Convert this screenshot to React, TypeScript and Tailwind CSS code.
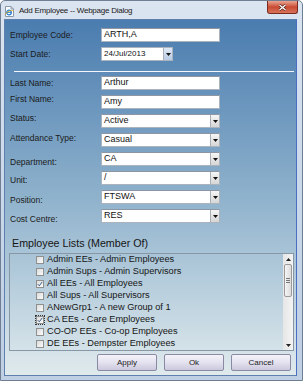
import type { ReactNode } from 'react';

const groups = [
  { label: 'Admin EEs - Admin Employees', checked: false },
  { label: 'Admin Sups - Admin Supervisors', checked: false },
  { label: 'All EEs - All Employees', checked: true },
  { label: 'All Sups - All Supervisors', checked: false },
  { label: 'ANewGrp1 - A new Group of 1', checked: false },
  { label: 'CA EEs - Care Employees', checked: true, focus: true },
  { label: 'CO-OP EEs - Co-op Employees', checked: false },
  { label: 'DE EEs - Dempster Employees', checked: false },
];

function DropButton({ light }: { light?: boolean }) {
  return (
    <div
      className={`w-[9px] h-full flex items-center justify-center border-l border-[#a9b0b8] ${
        light ? 'bg-gradient-to-b from-[#dfe8f5] to-[#b9cbe6]' : 'bg-gradient-to-b from-[#f6f6f6] to-[#d6d6d6]'
      }`}
    >
      <svg width="5" height="3" viewBox="0 0 5 3">
        <path d="M0 0h5L2.5 3z" fill="#111" />
      </svg>
    </div>
  );
}

function Row({ label, labelCls = '', children }: { label: string; labelCls?: string; children: ReactNode }) {
  return (
    <div className="flex h-[14px] items-stretch">
      <div className={`w-[91px] flex items-center text-[8.5px] text-[#1b1b1b] ${labelCls}`}>{label}</div>
      {children}
    </div>
  );
}

function TextBox({ value }: { value: string }) {
  return (
    <div className="w-[119px] bg-white border border-[#abb3bd] border-t-[#8d96a2] flex items-center px-[2px] text-[9px] text-[#111]">
      {value}
    </div>
  );
}

function Select({ value }: { value: string }) {
  return (
    <div className="w-[119px] bg-white border border-[#abb3bd] border-t-[#8d96a2] flex items-stretch text-[9px] text-[#111]">
      <div className="flex-1 flex items-center px-[2px]">{value}</div>
      <DropButton />
    </div>
  );
}

function Check({ checked, focus }: { checked: boolean; focus?: boolean }) {
  return (
    <div className={`w-[10px] h-[10px] flex items-center justify-center ${focus ? 'border border-dotted border-[#333]' : ''}`}>
      <div className="w-[8px] h-[8px] border border-[#8e8f8f] bg-gradient-to-br from-[#dcdcdc] to-[#fbfbfb] flex items-center justify-center">
        {checked && (
          <svg width="6" height="6" viewBox="0 0 6 6">
            <path d="M0.8 3.2L2.3 4.8L5.2 0.9" stroke="#2a4a7a" strokeWidth="0.9" fill="none" />
          </svg>
        )}
      </div>
    </div>
  );
}

function Btn({ label }: { label: string }) {
  return (
    <button className="w-[60px] h-[17px] rounded-[2px] border border-[#8b8aa5] bg-gradient-to-b from-[#f4f3fa] via-[#e4e2ef] to-[#cac8dc] text-[8px] text-[#1b1b1b]">
      {label}
    </button>
  );
}

export default function App() {
  return (
    <div className="w-[303px] h-[381px] bg-gradient-to-b from-[#dbe5f1] via-[#c9d8ea] to-[#bfcfe4] border border-[#6f7e92] rounded-t-[5px] font-['Liberation_Sans',Arial,sans-serif] overflow-hidden">
      {/* Title bar */}
      <div className="h-[18px] flex items-start justify-between">
        <div className="flex items-center gap-[4px] pl-[3px] pt-[4px]">
          <svg width="11" height="11" viewBox="0 0 11 11">
            <path d="M1.5 0.5h5.5l2.5 2.5v7.5h-8z" fill="#fff" stroke="#8a97a8" />
            <path d="M7 0.5v2.5h2.5" fill="none" stroke="#8a97a8" />
            <circle cx="5" cy="6.5" r="2.3" fill="none" stroke="#2a7fd8" strokeWidth="1.3" />
            <path d="M3 6.4h4" stroke="#2a7fd8" strokeWidth="1" />
            <path d="M1.2 8.5C3 5.5 7 4 9.5 4.8" stroke="#f0b400" strokeWidth="0.8" fill="none" />
          </svg>
          <span className="text-[8px] tracking-[-0.25px] text-[#1a1a1a]">Add Employee -- Webpage Dialog</span>
        </div>
        <div className="mr-[4px] w-[31px] h-[13px] rounded-b-[3px] border border-t-0 border-[#7a2a20] bg-gradient-to-b from-[#e8a593] via-[#c94a32] to-[#d6735a] flex items-center justify-center">
          <svg width="9" height="7" viewBox="0 0 9 7">
            <path d="M1.5 1L7.5 6M7.5 1L1.5 6" stroke="#4a1a12" strokeWidth="2.6" />
            <path d="M1.5 1L7.5 6M7.5 1L1.5 6" stroke="#fff" strokeWidth="1.4" />
          </svg>
        </div>
      </div>

      {/* Client area */}
      <div className="ml-[3px] w-[293px] h-[357px] border border-[#5f7fae] border-r-[#4b6dc2] bg-gradient-to-b from-[#4a7caf] via-[#8fb2cc] to-[#e0eaed] flex flex-col pt-[8px]">
        <div className="ml-[5px] flex flex-col gap-[5px]">
          <Row label="Employee Code:">
            <TextBox value="ARTH,A" />
          </Row>
          <Row label="Start Date:">
            <div className="w-[72px] bg-white border border-[#abb3bd] flex items-stretch text-[8px] text-[#111]">
              <div className="flex-1 flex items-center px-[2px]">24/Jul/2013</div>
              <DropButton light />
            </div>
          </Row>
        </div>

        <div className="mt-[10px] ml-[9px] w-[280px] h-px bg-[#f2f6fa]" />

        <div className="mt-[4px] ml-[5px] flex flex-col gap-[5px]">
          <Row label="Last Name:">
            <TextBox value="Arthur" />
          </Row>
          <Row label="First Name:" labelCls="pb-[5px]">
            <TextBox value="Amy" />
          </Row>
          <Row label="Status:" labelCls="pb-[5px]">
            <Select value="Active" />
          </Row>
          <Row label="Attendance Type:" labelCls="pb-[4px]">
            <Select value="Casual" />
          </Row>
          <Row label="Department:" labelCls="pt-[6px]">
            <Select value="CA" />
          </Row>
          <Row label="Unit:" labelCls="pt-[5px]">
            <Select value="/" />
          </Row>
          <Row label="Position:" labelCls="pt-[6px]">
            <Select value="FTSWA" />
          </Row>
          <Row label="Cost Centre:" labelCls="pt-[6px]">
            <Select value="RES" />
          </Row>
        </div>

        <div className="mt-[13px] ml-[7px] h-[14px] flex items-center text-[10.7px] text-[#151515]">
          Employee Lists (Member Of)
        </div>

        <div className="mt-[3px] ml-[4px] w-[285px] h-[98px] border border-[#8797a6] flex">
          <div className="flex-1 flex flex-col pl-[25px]">
            {groups.map((g) => (
              <div key={g.label} className="h-[12px] flex items-center gap-[2px] text-[9.2px] text-[#161616] whitespace-nowrap">
                <Check checked={g.checked} focus={g.focus} />
                <span>{g.label}</span>
              </div>
            ))}
          </div>
          <div className="w-[10px] bg-gradient-to-r from-[#e6e6e6] to-[#f4f4f4] flex flex-col">
            <div className="h-[10px] flex items-center justify-center">
              <svg width="5" height="3" viewBox="0 0 5 3">
                <path d="M0 3h5L2.5 0z" fill="#222" />
              </svg>
            </div>
            <div className="mx-[1px] h-[33px] rounded-[2px] border border-[#9a9a9a] bg-gradient-to-r from-[#f5f5f5] to-[#dcdcdc] flex flex-col items-center justify-center gap-[1px]">
              <div className="w-[4px] h-px bg-[#777]" />
              <div className="w-[4px] h-px bg-[#777]" />
              <div className="w-[4px] h-px bg-[#777]" />
            </div>
            <div className="flex-1" />
            <div className="h-[10px] flex items-center justify-center">
              <svg width="5" height="3" viewBox="0 0 5 3">
                <path d="M0 0h5L2.5 3z" fill="#222" />
              </svg>
            </div>
          </div>
        </div>

        <div className="mt-[3px] pr-[5px] flex justify-end gap-[7px]">
          <Btn label="Apply" />
          <Btn label="Ok" />
          <Btn label="Cancel" />
        </div>
      </div>
    </div>
  );
}
